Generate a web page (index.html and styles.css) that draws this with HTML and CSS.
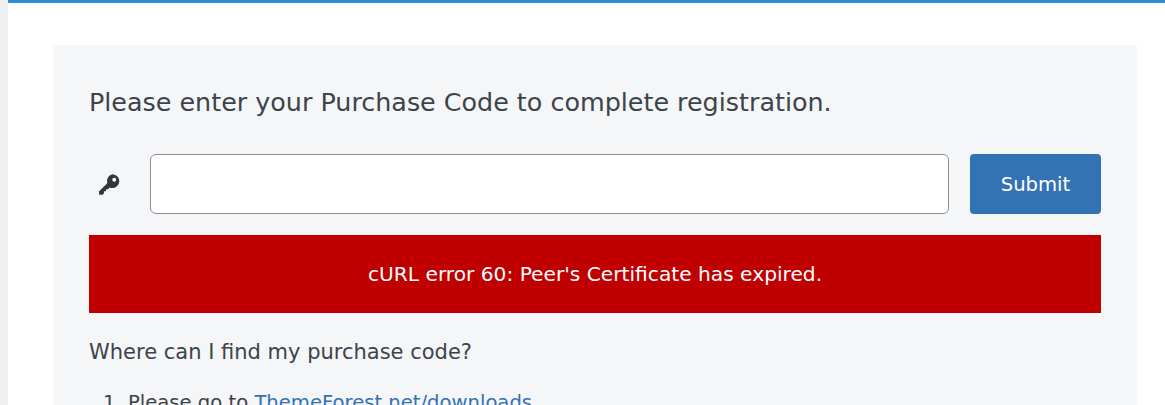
FILE: index.html
```html
<!DOCTYPE html>
<html lang="en">
	<head>
		<meta charset="UTF-8" />
		<title>Registration</title>
		<link rel="stylesheet" href="styles.css">
	</head>
	<body>
		<section class="wrap">
			<div class="card">
				<h2>Please enter your Purchase Code to complete registration.</h2>
				<form class="code-form">
					<svg class="key" viewBox="0 0 24 24" width="28" height="28" aria-hidden="true">
						<path fill-rule="evenodd" fill="#32373c" d="M15.2 3.6a6 6 0 0 1 5.6 6.2 6 6 0 0 1-6.2 5.700c-.8 0-1.500-.2-2.100-.5l-1.300 1.400h-1.700v1.800H7.700v1.800l-1.200 1.200-2.900.1-.2-2.900 7.100-7a6 6 0 0 1 4.700-7.800Zm1.300 3a1.700 1.700 0 1 0 0 3.400 1.700 1.700 0 0 0 0-3.400Z" />
					</svg>
					<input type="text" class="code-input" />
					<button type="button" class="submit">Submit</button>
				</form>
				<div class="error">cURL error 60: Peer's Certificate has expired.</div>
				<p class="help">Where can I find my purchase code?</p>
				<ol class="steps">
					<li>Please go to <a href="#">ThemeForest.net/downloads</a></li>
				</ol>
			</div>
		</section>
	</body>
</html>
```

FILE: styles.css
```css
html,
body {
	height: 100%;
	overflow: hidden;
}

body {
	margin: 0;
	padding-left: 8px;
	background-color: #f0f0f1;
	font-family: "DejaVu Sans", "Liberation Sans", sans-serif;
	color: #3c434a;
}

.wrap {
	min-height: 100%;
	padding: 42px 28px 0 45px;
	background-color: #fff;
	border-top: 3px solid #2f8dd6;
}

.card {
	padding: 36px;
	background-color: #f5f6f8;
}

h2 {
	margin: 0;
	font-size: 25.4px;
	line-height: 42px;
	font-weight: 400;
}

.code-form {
	display: flex;
	align-items: center;
	margin-top: 31px;
}

.key {
	flex: none;
	margin-left: 6px;
	margin-right: 27px;
}

.code-input {
	flex: 1;
	box-sizing: border-box;
	height: 60px;
	background-color: #fff;
	border: 1px solid #8c8f94;
	border-radius: 6px;
}

.submit {
	flex: none;
	width: 131px;
	height: 60px;
	margin-left: 21px;
	background-color: #3373b5;
	border: none;
	border-radius: 4px;
	color: #fff;
	font-family: inherit;
	font-size: 19.6px;
}

.error {
	margin-top: 21px;
	padding: 26px 0;
	background-color: #c00000;
	color: #fff;
	font-size: 20.2px;
	line-height: 26px;
	text-align: center;
}

.help {
	margin: 24px 0 0;
	font-size: 21px;
	line-height: 30px;
}

.steps {
	margin: 21px 0 0;
	padding-left: 39px;
	font-size: 19.6px;
	line-height: 30px;
}

.steps a {
	color: #3373b5;
	text-decoration: none;
}
```
